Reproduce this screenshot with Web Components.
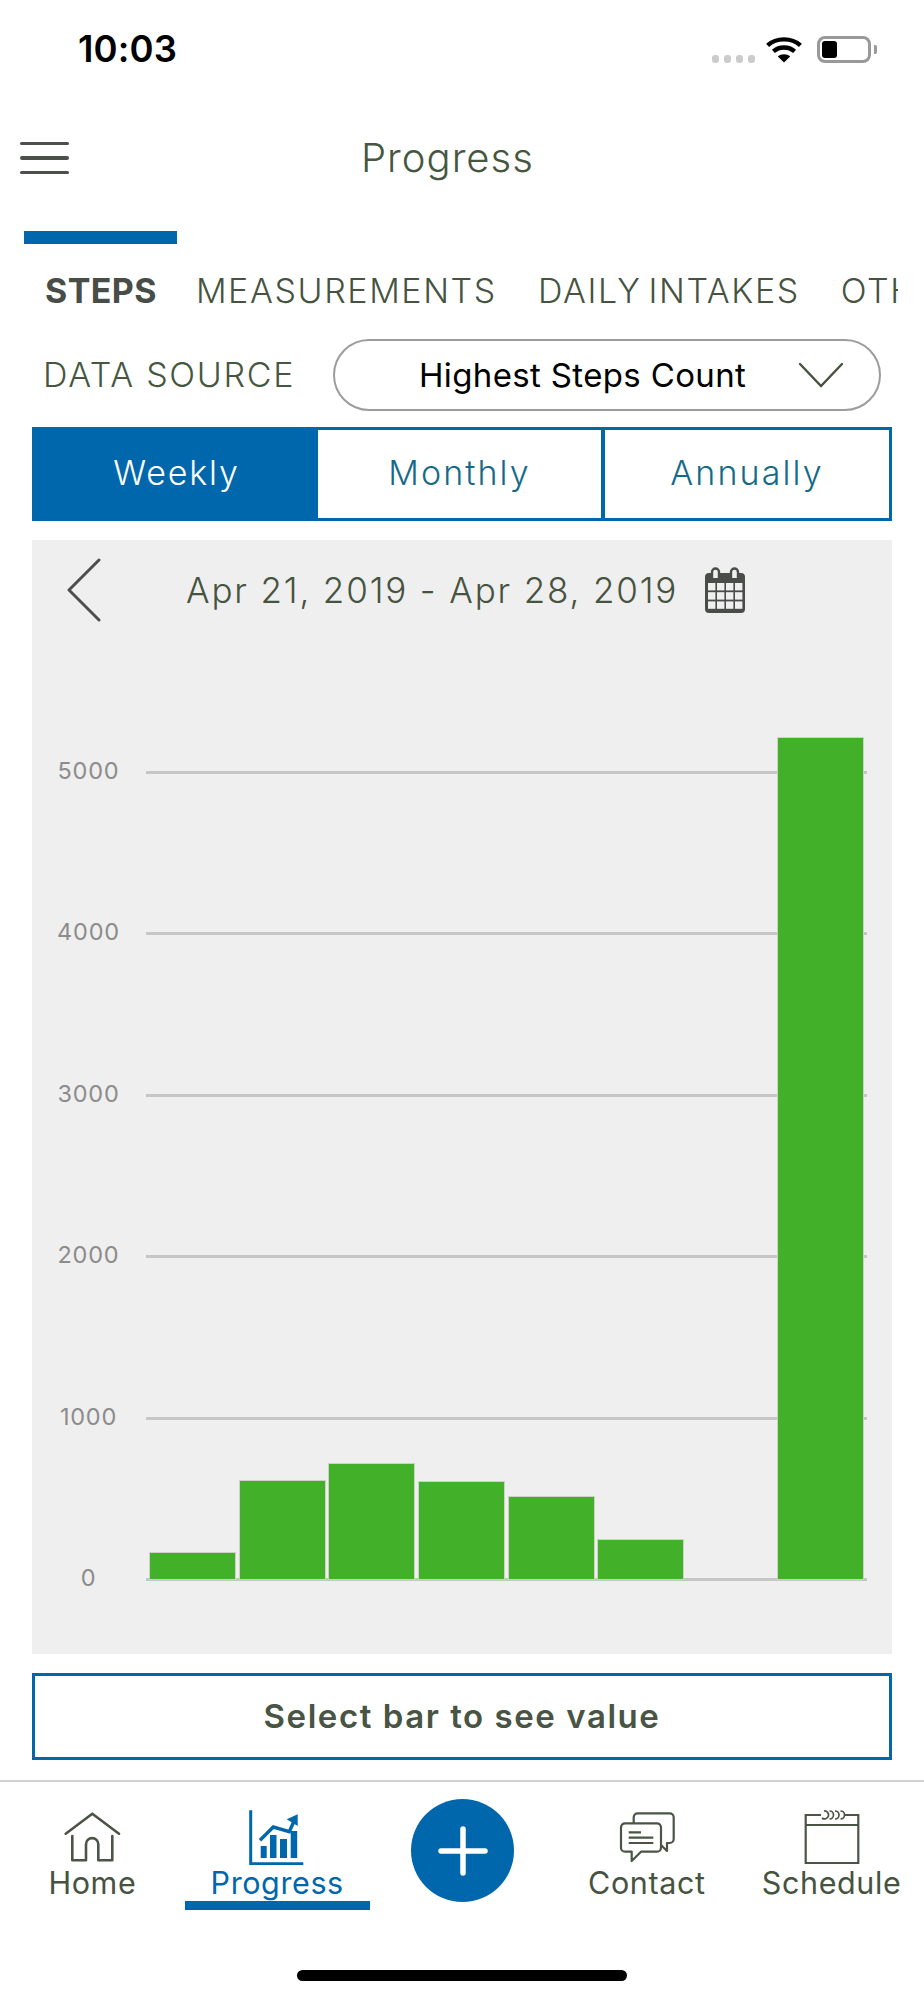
<!DOCTYPE html>
<html lang="en">
<head>
<meta charset="utf-8">
<title>Progress</title>
<style>
  html, body { margin: 0; background: #fff; }
  body { width: 924px; height: 2000px; overflow: hidden; font-family: Inter, "Liberation Sans", sans-serif; color: #46533f; }
</style>
</head>
<body>
<status-bar></status-bar>
<app-header>Progress</app-header>
<metric-tabs></metric-tabs>
<data-source>Highest Steps Count</data-source>
<period-switch></period-switch>
<steps-chart></steps-chart>
<value-box>Select bar to see value</value-box>
<bottom-nav></bottom-nav>
<home-indicator></home-indicator>

<script>
const BLUE = '#0067ac';

class StatusBar extends HTMLElement {
  constructor() {
    super();
    this.attachShadow({ mode: 'open' });
    this.shadowRoot.innerHTML = `
    <style>
      :host { display: flex; align-items: center; height: 98px; padding: 0 53px 0 78px; box-sizing: border-box; }
      .time { font: 600 36.5px/1 Inter, sans-serif; color: #000; letter-spacing: 0.1px; flex: 1; }
      .dots { display: flex; gap: 4.7px; margin: 20px 11.5px 0 0; }
      .dots i { width: 7px; height: 8px; border-radius: 3px; background: #ccc; }
      svg { display: block; }
      .wifi { margin-right: 15px; }
      .battery { width: 54px; height: 27px; border: 3px solid #999; border-radius: 8px; box-sizing: border-box; padding: 2px; position: relative; }
      .battery b { display: block; width: 15px; height: 100%; background: #000; border-radius: 3px; }
      .battery::after { content: ''; position: absolute; right: -9px; top: 6px; width: 3px; height: 9px; background: #999; border-radius: 0 2px 2px 0; }
    </style>
    <span class="time">10:03</span>
    <span class="dots"><i></i><i></i><i></i><i></i></span>
    <svg class="wifi" width="36" height="27" viewBox="0 0 36 27" fill="none" stroke="#000" stroke-width="4.4">
      <path d="M1.6 9.4C10.4 1.4 25.6 1.4 34.4 9.4"/>
      <path d="M7.4 15.4C13.4 10.2 22.6 10.2 28.6 15.4"/>
      <path d="M18 26.6 11.8 20.4C15 17.6 21 17.6 24.2 20.4Z" fill="#000" stroke="none"/>
    </svg>
    <span class="battery"><b></b></span>`;
  }
}
customElements.define('status-bar', StatusBar);

class AppHeader extends HTMLElement {
  constructor() {
    super();
    this.attachShadow({ mode: 'open' });
    this.shadowRoot.innerHTML = `
    <style>
      :host { display: flex; align-items: center; height: 133px; padding: 0 0 13px 20px; box-sizing: border-box; }
      .menu { display: flex; flex-direction: column; gap: 11px; width: 49px; }
      .menu i { height: 3.6px; background: #4c4f4b; border-radius: 2px; }
      .title { margin-left: 292px; font: 300 40px/1 Inter, sans-serif; letter-spacing: 1px; color: #46573f; }
    </style>
    <div class="menu"><i></i><i></i><i></i></div>
    <div class="title"><slot></slot></div>`;
  }
}
customElements.define('app-header', AppHeader);

class MetricTabs extends HTMLElement {
  constructor() {
    super();
    this.attachShadow({ mode: 'open' });
    this.shadowRoot.innerHTML = `
    <style>
      :host { display: block; height: 108px; width: 898px; overflow: hidden; }
      .marker { width: 153px; height: 13px; margin-left: 24px; background: ${BLUE}; }
      .row { display: flex; gap: 41px; padding: 30px 0 0 45px; white-space: nowrap; font: 300 34px/1 Inter, sans-serif; letter-spacing: 1.6px; word-spacing: -4px; color: #46533f; }
      .on { font-weight: 700; color: #484d48; letter-spacing: 0.4px; margin-right: -2px; }
    </style>
    <div class="marker"></div>
    <div class="row">
      <span class="on">STEPS</span><span>MEASUREMENTS</span><span>DAILY INTAKES</span><span>OTHERS</span>
    </div>`;
  }
}
customElements.define('metric-tabs', MetricTabs);

class DataSource extends HTMLElement {
  constructor() {
    super();
    this.attachShadow({ mode: 'open' });
    this.shadowRoot.innerHTML = `
    <style>
      :host { display: flex; align-items: center; padding-left: 43px; }
      .label { width: 290px; font: 300 34px/1 Inter, sans-serif; letter-spacing: 1.7px; color: #46573f; white-space: nowrap; }
      .select { width: 548px; height: 72px; box-sizing: border-box; border: 2px solid #9c9c9c; border-radius: 36px; display: flex; align-items: center; padding-left: 84px; font: 400 33px/1 Inter, sans-serif; letter-spacing: 0.35px; color: #000; }
      svg { margin-left: 52px; }
    </style>
    <div class="label">DATA SOURCE</div>
    <div class="select"><slot></slot>
      <svg width="46" height="26" viewBox="0 0 46 26" fill="none" stroke="#46533f" stroke-width="2.4" stroke-linecap="round"><path d="M2 2 23 24 44 2"/></svg>
    </div>`;
  }
}
customElements.define('data-source', DataSource);

class PeriodSwitch extends HTMLElement {
  constructor() {
    super();
    this.attachShadow({ mode: 'open' });
    this.shadowRoot.innerHTML = `
    <style>
      :host { display: grid; grid-template-columns: 283px 283px 1fr; height: 94px; margin: 16px 32px 0; box-sizing: border-box; border: 3px solid ${BLUE}; font: 300 34px/1 Inter, sans-serif; letter-spacing: 2.1px; color: #146a88; }
      div { display: flex; align-items: center; justify-content: center; padding-bottom: 3px; }
      div:last-child { border-left: 4px solid ${BLUE}; }
      .on { background: ${BLUE}; color: #fff; letter-spacing: 1.8px; }
    </style>
    <div class="on">Weekly</div><div>Monthly</div><div>Annually</div>`;
  }
}
customElements.define('period-switch', PeriodSwitch);

class StepsChart extends HTMLElement {
  constructor() {
    super();
    this.attachShadow({ mode: 'open' });
    const ticks = [5000, 4000, 3000, 2000, 1000, 0];
    // bar heights in px over the zero line, day 7 has no steps
    const bars = [26, 98, 115, 97, 82, 39, 0, 841];
    this.shadowRoot.innerHTML = `
    <style>
      :host { display: block; height: 1114px; margin: 19px 32px 0; background: #efefef; box-sizing: border-box; padding-top: 18px; }
      .head { display: flex; align-items: center; height: 64px; padding-left: 35px; }
      .title { margin-left: 85px; font: 300 35px/1 Inter, sans-serif; letter-spacing: 1.85px; color: #46533f; white-space: nowrap; }
      .cal { margin-left: 26px; }
      .plot { position: relative; display: flex; flex-direction: column; justify-content: space-between; height: 810px; margin-top: 149px; }
      .tick { display: grid; grid-template-columns: 114px 1fr 25px; align-items: center; height: 3px; }
      .tick span { padding-right: 1px; text-align: center; font: 400 23.5px/3px Inter, sans-serif; letter-spacing: 0.8px; color: #8c8c8c; position: relative; top: -2px; }
      .tick i { height: 3px; background: #c6c6c6; }
      .bars { position: absolute; left: 118px; bottom: 2px; display: flex; align-items: flex-end; gap: 4.7px; }
      .bars i { width: 85px; background: #43b02a; box-shadow: 0 0 0 1px #cfd0c8; }
      .bars i.empty { box-shadow: none; background: none; }
    </style>
    <div class="head">
      <svg width="34" height="64" viewBox="0 0 34 64" fill="none" stroke="#4c4f4b" stroke-width="3" stroke-linecap="round" stroke-linejoin="round"><path d="M32 2 2 32 32 62"/></svg>
      <div class="title">Apr 21, 2019 - Apr 28, 2019</div>
      <svg class="cal" width="42" height="46" viewBox="0 0 42 46">
        <path d="M5 6h32a4 4 0 0 1 4 4v32a4 4 0 0 1-4 4H5a4 4 0 0 1-4-4V10a4 4 0 0 1 4-4z" fill="#4a4c4a"/>
        <path d="M8 11V5a3.5 3.5 0 0 1 7 0v6M27 11V5a3.5 3.5 0 0 1 7 0v6" fill="#efefef" stroke="#4a4c4a" stroke-width="2.4"/>
        <g fill="#efefef">
          <rect x="4" y="16" width="7.4" height="7.4"/><rect x="13" y="16" width="7.4" height="7.4"/><rect x="22" y="16" width="7.4" height="7.4"/><rect x="31" y="16" width="7.4" height="7.4"/>
          <rect x="4" y="25.2" width="7.4" height="7.4"/><rect x="13" y="25.2" width="7.4" height="7.4"/><rect x="22" y="25.2" width="7.4" height="7.4"/><rect x="31" y="25.2" width="7.4" height="7.4"/>
          <rect x="4" y="34.4" width="7.4" height="7.4"/><rect x="13" y="34.4" width="7.4" height="7.4"/><rect x="22" y="34.4" width="7.4" height="7.4"/><rect x="31" y="34.4" width="7.4" height="7.4"/>
        </g>
      </svg>
    </div>
    <div class="plot">
      ${ticks.map(t => `<div class="tick"><span>${t}</span><i></i></div>`).join('')}
      <div class="bars">${bars.map(h => `<i class="${h ? '' : 'empty'}" style="height:${h}px"></i>`).join('')}</div>
    </div>`;
  }
}
customElements.define('steps-chart', StepsChart);

class ValueBox extends HTMLElement {
  constructor() {
    super();
    this.attachShadow({ mode: 'open' });
    this.shadowRoot.innerHTML = `
    <style>
      :host { display: flex; align-items: center; justify-content: center; height: 87px; margin: 19px 32px 0; box-sizing: border-box; border: 3px solid ${BLUE}; font: 600 33px/1 Inter, sans-serif; letter-spacing: 1.55px; color: #485444; }
    </style>
    <slot></slot>`;
  }
}
customElements.define('value-box', ValueBox);

class NavItem extends HTMLElement {
  constructor() {
    super();
    this.attachShadow({ mode: 'open' });
    this.shadowRoot.innerHTML = `
    <style>
      :host { display: flex; flex-direction: column; align-items: center; height: 127px; padding-top: 26px; box-sizing: border-box; font: 400 30.5px/1 Inter, sans-serif; letter-spacing: 0.6px; color: #46533f; white-space: nowrap; }
      :host([active]) { color: ${BLUE}; border-bottom: 9px solid ${BLUE}; }
      .icon { height: 56px; }
      .label { margin-top: 3px; }
    </style>
    <div class="icon"><slot name="icon"></slot></div>
    <div class="label"><slot></slot></div>`;
  }
}
customElements.define('nav-item', NavItem);

class BottomNav extends HTMLElement {
  constructor() {
    super();
    this.attachShadow({ mode: 'open' });
    this.shadowRoot.innerHTML = `
    <style>
      :host { display: grid; grid-template-columns: repeat(5, 1fr); height: 130px; margin-top: 20px; border-top: 2px solid #d2d2d2; box-sizing: border-box; padding-top: 1px; }
      svg { display: block; }
      .plus { display: flex; justify-content: center; padding: 16px 0 0 2px; }
      .plus div { width: 103px; height: 103px; border-radius: 50%; background: ${BLUE}; display: flex; align-items: center; justify-content: center; }
    </style>
    <nav-item>
      <svg slot="icon" width="64" height="56" viewBox="0 0 64 56" fill="none" stroke="#4a5546" stroke-width="2.6" stroke-linecap="round" stroke-linejoin="round">
        <path d="M5.7 24.7 32.3 4.7 59 24.7"/>
        <path d="M12.3 27V51.3H26V35.3a6.15 6.15 0 0 1 12.3 0V51.3H52.3V27"/>
      </svg>
      Home
    </nav-item>
    <nav-item active>
      <svg slot="icon" width="64" height="56" viewBox="0 0 64 56" fill="none" stroke="${BLUE}">
        <path d="M5.7 1.3V54.7H58.3" stroke-width="3"/>
        <path d="M15 31.3 28.3 18 44.3 22.7 50 10" stroke-width="3.4"/>
        <path d="M41.7 10.3 52.7 5.3V17Z" fill="${BLUE}" stroke="none"/>
        <g fill="${BLUE}" stroke="none">
          <rect x="15.7" y="37" width="6" height="12"/>
          <rect x="25" y="26" width="6.5" height="23"/>
          <rect x="35" y="30" width="7" height="19"/>
          <rect x="45.7" y="22" width="6.5" height="27"/>
        </g>
      </svg>
      Progress
    </nav-item>
    <div class="plus"><div>
      <svg width="50" height="50" viewBox="0 0 50 50" stroke="#fff" stroke-width="5.5" stroke-linecap="round"><path d="M25 3V47M3 25H47"/></svg>
    </div></div>
    <nav-item>
      <svg slot="icon" width="64" height="56" viewBox="0 0 64 56" fill="none" stroke="#4a5546" stroke-width="2.2" stroke-linejoin="round">
        <path d="M18.7 14V8.3a4 4 0 0 1 4-4H54.7a4 4 0 0 1 4 4V30a4 4 0 0 1-4 4H52V42L46 36"/>
        <path d="M10 14.3H42a4 4 0 0 1 4 4V38.7a4 4 0 0 1-4 4H26L16.7 52V42.7H10a4 4 0 0 1-4-4V18.3a4 4 0 0 1 4-4Z"/>
        <path d="M13.7 23.3H26M13.7 28.7H38.3M13.7 34H38.3"/>
      </svg>
      Contact
    </nav-item>
    <nav-item>
      <svg slot="icon" width="64" height="56" viewBox="0 0 64 56" fill="none" stroke="#4a5546" stroke-width="2.2">
        <path d="M21 6H5.7V54H58.3V6H44.3M5.7 16H58.3"/>
        <g stroke-width="1.7"><path d="M24 2a4 4 0 1 1-2 7M29.5 2a4 4 0 0 1 0 8M35 2a4 4 0 0 1 0 8M40.5 2a4 4 0 0 1 0 8"/></g>
      </svg>
      Schedule
    </nav-item>`;
  }
}
customElements.define('bottom-nav', BottomNav);

class HomeIndicator extends HTMLElement {
  constructor() {
    super();
    this.attachShadow({ mode: 'open' });
    this.shadowRoot.innerHTML = `
    <style>
      :host { display: block; width: 330px; height: 11px; margin: 60px auto 0; background: #000; border-radius: 6px; }
    </style>`;
  }
}
customElements.define('home-indicator', HomeIndicator);
</script>
</body>
</html>
